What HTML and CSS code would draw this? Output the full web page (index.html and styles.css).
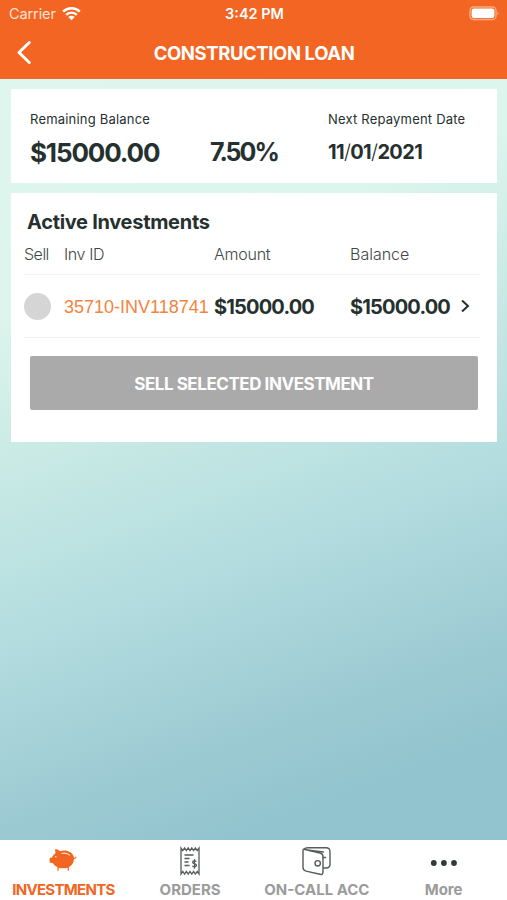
FILE: index.html
```html
<!DOCTYPE html>
<html lang="en">
<head>
<meta charset="utf-8">
<title>Construction Loan</title>
<link rel="stylesheet" href="styles.css">
</head>
<body>
<div class="app">
  <header class="top">
    <div class="status">
      <div class="carrier"><span class="carrier-name">Carrier</span>
        <svg width="19" height="15" viewBox="0 0 19 15"><g fill="none" stroke="#fff" stroke-width="2.4"><path d="M1.2 5.6a11.8 11.8 0 0 1 16.600 0"/><path d="M4.200 8.800a7.500 7.500 0 0 1 10.600 0"/></g><path d="M6.300 11a4.600 4.600 0 0 1 6.400 0L9.500 14.300z" fill="#fff"/></svg>
      </div>
      <div class="clock">3:42 PM</div>
      <svg class="battery" width="31" height="15" viewBox="0 0 31 15"><rect x="1" y="1" width="26" height="12.500" rx="3.600" fill="none" stroke="#f9ac82" stroke-width="1.300"/><rect x="2.600" y="2.600" width="22.800" height="9.300" rx="2.200" fill="#fff"/><path d="M28.500 5.200q2 2 0 4z" fill="#f9ac82"/></svg>
    </div>
    <div class="nav">
      <svg class="back" width="16" height="26" viewBox="0 0 16 26"><path d="M13.300 2.500L3 12.500l10.300 10" fill="none" stroke="#fff" stroke-width="3" stroke-linecap="round" stroke-linejoin="round"/></svg>
      <h1 class="title">CONSTRUCTION LOAN</h1>
    </div>
  </header>
  <main class="content">
    <section class="card summary">
      <div class="label"><span class="remaining">Remaining Balance</span></div>
      <div></div>
      <div class="label"><span class="next">Next Repayment Date</span></div>
      <div class="big">$15000.00</div>
      <div class="big rate">7.50%</div>
      <div class="date">11<i>/</i>01<i>/</i>2021</div>
    </section>
    <section class="card investments">
      <h2 class="heading">Active Investments</h2>
      <div class="row head"><span class="h-sell">Sell</span><span class="h-id">Inv ID</span><span class="h-amount">Amount</span><span>Balance</span></div>
      <div class="row item">
        <span class="radio"></span><span class="inv">35710-INV118741</span><span class="amount">$15000.00</span><span class="amount">$15000.00</span>
        <svg width="10" height="15" viewBox="0 0 10 15"><path d="M2 1.500l6 5.500-6 5.500" fill="none" stroke="#26312f" stroke-width="2"/></svg>
      </div>
      <button class="sell">SELL SELECTED INVESTMENT</button>
    </section>
  </main>
  <footer class="tabs">
    <div class="tab active">
      <svg width="30" height="26" viewBox="0 0 30 26"><path d="M7 1.300c1.800-.1 3.700.5 4.900 1.900C14.500 2 19.500 1.900 22.900 4.500c1.800 1.400 2.800 3.300 3 5.200.9 0 1.600-.4 2-1.300l.7.300c-.4 1.400-1.400 2.300-2.700 2.500 0 3.200-1.900 6.200-5 7.900v3.600h-1.300v-3c-2.700.8-5.900.8-8.900.100v2.900H9.400v-3.700c-2-.8-3.400-2-4.300-3.700L1.600 14.600v-4.500l2.400-.6c.6-1.700 1.900-3.200 3.500-4.300z" fill="#f26522"/><path d="M14 5.300c2.800-.5 5.500.1 7.600 1.800" fill="none" stroke="#fff" stroke-width="1" stroke-linecap="round"/><circle cx="7.800" cy="8.800" r=".7" fill="#fff"/></svg>
      <span class="t1">INVESTMENTS</span>
    </div>
    <div class="tab">
      <svg class="receipt" width="22" height="30" viewBox="0 0 22 30"><g fill="none" stroke="#555c5a" stroke-width="1.300"><path d="M2 2l1.800 2.600L5.600 2l1.800 2.600L9.200 2 11 4.600 12.800 2l1.800 2.600L16.400 2l1.800 2.600L20 2v26l-1.800-2.600-1.800 2.600-1.800-2.600-1.800 2.600L11 25.400 9.200 28l-1.800-2.600L5.600 28l-1.800-2.600L2 28z"/><path d="M5.500 9h9M5.500 12.500h5M5.500 16h4M5.500 19.500h5"/><path d="M17.300 15.600c-.5-1-3.700-1.100-3.700.7 0 1.900 3.900 1 3.900 3 0 1.900-3.500 1.900-4.100.5M15.500 13v9.700"/></g></svg>
      <span class="t2">ORDERS</span>
    </div>
    <div class="tab">
      <svg class="wallet" width="32" height="30" viewBox="0 0 32 30"><g fill="none" stroke="#555c5a" stroke-width="1.400" stroke-linejoin="round" stroke-linecap="round"><path d="M3 3.200Q4 1.800 7 1.800h18q4 0 4 4v12.500q0 3.700-4 3.700h-2.500"/><path d="M3 3.200L19 7q3 .8 3 3.500v15.500q0 3-3 2.300L5 25.100Q2 24.200 2 21.500V4.500Q2 3 3 3.200z"/><path d="M8 4.300L22.500 6M22 11.500h2.500"/><circle cx="16.700" cy="17.300" r="2.700"/></g></svg>
      <span class="t3">ON-CALL ACC</span>
    </div>
    <div class="tab">
      <svg class="dots" width="30" height="8" viewBox="0 0 30 8"><g fill="#333b3a"><circle cx="4.800" cy="4" r="2.900"/><circle cx="14.900" cy="4" r="2.900"/><circle cx="25" cy="4" r="2.900"/></g></svg>
      <span class="t4">More</span>
    </div>
  </footer>
</div>
</body>
</html>
```
FILE: styles.css
```css
* { box-sizing: border-box; }
body { margin: 0; font-family: Inter, "Liberation Sans", sans-serif; color: #26312f; }
h1, h2 { margin: 0; }
svg { display: block; flex: none; }
span, h1, h2, button { white-space: nowrap; }
.app { width: 507px; height: 900px; display: flex; flex-direction: column; overflow: hidden; }
.top { height: 79px; background: #f26522; color: #fff; }
.status { height: 27px; display: grid; grid-template-columns: 1fr auto 1fr; align-items: center; padding: 0 7px 0 9px; }
.carrier { display: flex; align-items: center; gap: 6px; font-size: 14.500px; letter-spacing: -0.1px; color: #ffe3d3; }
.clock { font-size: 14.500px; font-weight: 600; }
.battery { justify-self: end; }
.nav { height: 52px; display: grid; grid-template-columns: 40px 1fr 40px; align-items: center; padding-left: 16px; padding-right: 15px; }
.title { font-size: 18.500px; font-weight: 650; text-align: center; letter-spacing: -0.4px; }
.content { flex: 1; padding: 10px 10px 0 11px; display: flex; flex-direction: column; gap: 10px; background: linear-gradient(160deg, #def6ee 0%, #dcf5ed 25%, #cdece6 38%, #b5dee0 58%, #9bc9d2 80%, #91c4cf 90%, #91c4cf 100%); }
.card { background: #fff; }
.summary { height: 94px; padding: 19px 0 0 19px; display: grid; grid-template-columns: 180px 118px 1fr; grid-template-rows: 22px 44px; align-items: center; }
.label { font-size: 13px; letter-spacing: 0.2px; }
.big { font-size: 26px; font-weight: 700; letter-spacing: -1.150px; }
.rate { font-size: 25px; letter-spacing: -2px; }
.date { font-size: 20px; font-weight: 700; letter-spacing: -0.65px; }
.date i { font-style: normal; font-weight: 300; }
.investments { height: 249px; padding: 16px 16px 0 13px; }
.heading { font-size: 20px; line-height: 27px; font-weight: 650; padding-left: 3px; letter-spacing: -0.3px; }
.row { display: grid; grid-template-columns: 40px 150px 136px 110px 1fr; align-items: center; border-bottom: 1px solid #f2f3f3; }
.head { height: 39px; padding-bottom: 2px; font-size: 16px; font-weight: 300; color: #3f4746; }
.h-sell { letter-spacing: -0.5px; }
.h-id { letter-spacing: -0.4px; }
.h-amount { letter-spacing: -0.25px; }
.item { height: 63px; padding-top: 1px; }
.radio { width: 27px; height: 27px; border-radius: 50%; background: #d5d5d5; }
.inv { font-family: "Liberation Sans", sans-serif; font-size: 18px; color: #f58340; padding-top: 1px; }
.amount { font-size: 20px; font-weight: 700; letter-spacing: -0.83px; }
.sell { display: block; width: 448px; height: 54px; margin: 18px 0 0 6px; padding-top: 2px; border: 0; border-radius: 2px; background: #aaa; color: #fff; font: 650 17px Inter, sans-serif; letter-spacing: -0.45px; }
.tabs { height: 60px; background: #fff; display: grid; grid-template-columns: repeat(4, 126.750px); }
.tab { display: grid; grid-template-rows: 41px 17px; justify-items: center; align-items: center; font-size: 15px; font-weight: 650; color: #9b9b9b; }
.active { color: #f26522; }
.t1 { letter-spacing: -0.7px; }
.dots { margin-top: 4px; }
```
